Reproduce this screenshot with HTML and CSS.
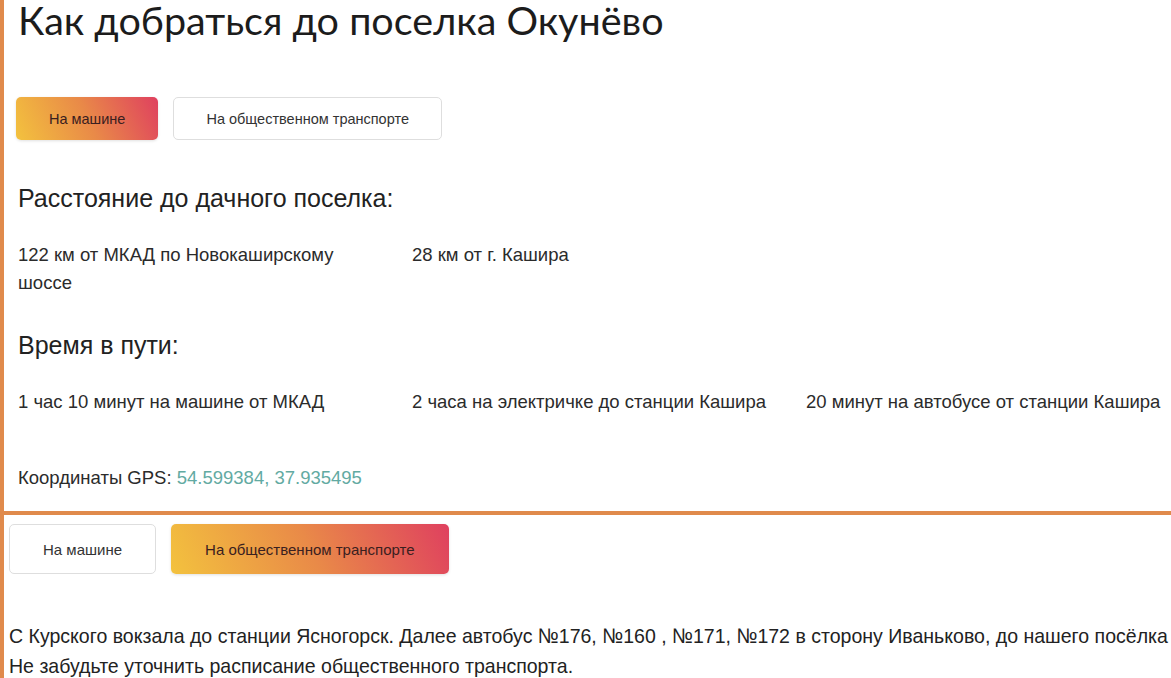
FILE: index.html
```html
<!DOCTYPE html>
<html lang="ru">

<head>
    <meta charset="UTF-8">
    <meta name="viewport" content="width=device-width, initial-scale=1.0">
    <title>Как добраться до поселка Окунёво</title>
    <link rel="stylesheet" href="styles.css">
</head>

<body>

    <!-- Route by car -->
    <section class="route route-car">
        <h1>Как добраться до поселка Окунёво</h1>

        <div class="tabs">
            <button class="tab active">На машине</button>
            <button class="tab">На общественном транспорте</button>
        </div>

        <h3>Расстояние до дачного поселка:</h3>
        <div class="facts">
            <p>122 км от МКАД по Новокаширскому шоссе</p>
            <p>28 км от г. Кашира</p>
        </div>

        <h3>Время в пути:</h3>
        <div class="facts">
            <p>1 час 10 минут на машине от МКАД</p>
            <p>2 часа на электричке до станции Кашира</p>
            <p>20 минут на автобусе от станции Кашира</p>
        </div>

        <p class="gps">Координаты GPS: <a href="#">54.599384, 37.935495</a></p>
    </section>

    <!-- Route by public transport -->
    <section class="route route-bus">
        <div class="tabs">
            <button class="tab">На машине</button>
            <button class="tab active">На общественном транспорте</button>
        </div>

        <p class="note">С Курского вокзала до станции Ясногорск. Далее автобус №176, №160 , №171, №172 в сторону Иваньково, до нашего посёлка<br>
            Не забудьте уточнить расписание общественного транспорта.</p>
    </section>

</body>

</html>
```

FILE: styles.css
```css
/* General Styles */
html,
body {
    margin: 0;
    background-color: #ffffff;
    font-family: "Liberation Sans", Arial, sans-serif;
    color: #2b2b2b;
    overflow: hidden;
}

body {
    border-left: 4px solid #e08a4c;
    min-height: 100vh;
}

h1 {
    margin: 0;
    font-family: Lato, "Open Sans", sans-serif;
    font-weight: 400;
    font-size: 39.5px;
    line-height: 40px;
    color: #1c1c1c;
}

.route-car {
    padding: 0 0 19px 14px;
    border-bottom: 4px solid #e08a4c;
}

.route-bus {
    padding: 9px 0 0 5px;
}

/* Tabs */
.tabs {
    display: flex;
    gap: 15px;
}

.route-car .tabs {
    margin-top: 57px;
    margin-left: -2px;
}

.tab {
    height: 43px;
    padding: 0 32px;
    background: #ffffff;
    border: 1px solid #dedede;
    border-radius: 5px;
    font-family: "Liberation Sans", Arial, sans-serif;
    font-size: 14.5px;
    color: #333;
    cursor: pointer;
}

.tab.active {
    border-color: transparent;
    background: linear-gradient(65deg, #f3c23e 0%, #e98a48 50%, #df405f 100%) border-box;
    color: #3a2020;
    box-shadow: 0 1px 3px rgba(0, 0, 0, 0.12);
}

.route-bus .tab {
    height: 50px;
    padding: 0 33px;
    font-size: 15px;
}

/* Facts */
h3 {
    margin: 43px 0 0;
    font-size: 25px;
    line-height: 30px;
    font-weight: 400;
    color: #222;
}

h3 + .facts {
    margin-top: 28px;
}

.facts + h3 {
    margin-top: 33px;
}

.facts {
    display: grid;
    grid-template-columns: repeat(3, 370px);
    column-gap: 24px;
}

.facts p {
    margin: 0;
    font-size: 18.5px;
    line-height: 28px;
}

.gps {
    margin: 48px 0 0;
    font-size: 18.5px;
    line-height: 28px;
}

.gps a {
    color: #62aaa2;
    text-decoration: none;
}

.note {
    margin: 47px 0 0;
    font-size: 21px;
    line-height: 30px;
    color: #222;
    white-space: nowrap;
    transform: scaleX(0.93);
    transform-origin: left top;
}
```
